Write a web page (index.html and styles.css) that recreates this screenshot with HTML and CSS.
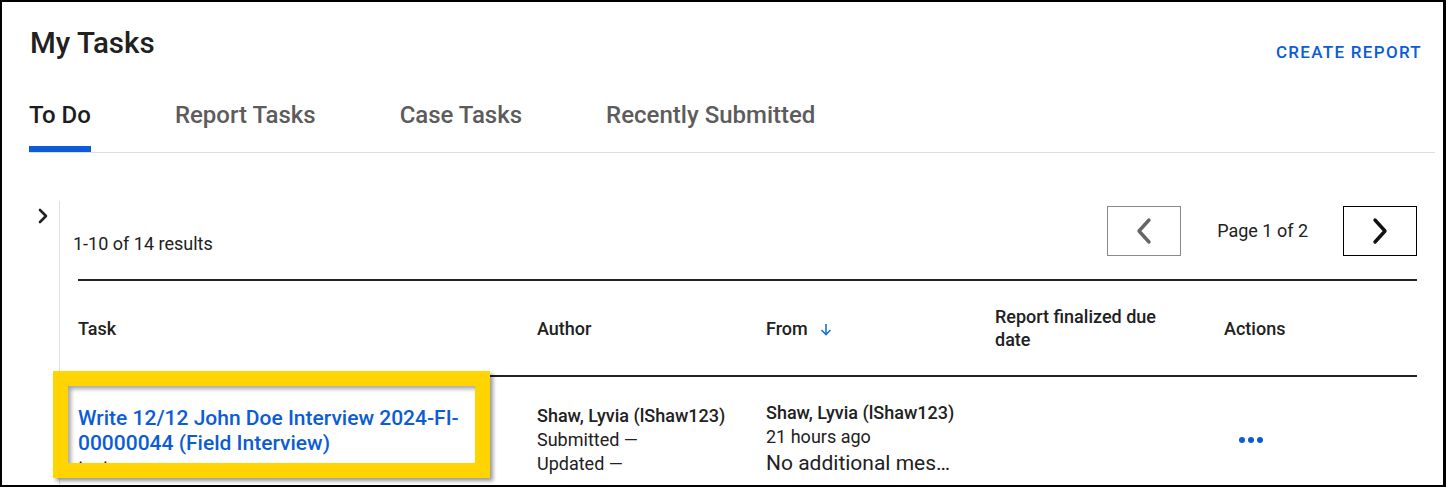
FILE: index.html
```html
<!DOCTYPE html>
<html lang="en">
<head>
<meta charset="utf-8">
<title>My Tasks</title>
<link rel="stylesheet" href="styles.css">
</head>
<body>
<div class="frame">
  <header class="header">
    <h1 class="title">My Tasks</h1>
    <a class="create" href="#">CREATE REPORT</a>
  </header>
  <nav class="tabs">
    <div class="tab active">To Do</div>
    <div class="tab">Report Tasks</div>
    <div class="tab">Case Tasks</div>
    <div class="tab">Recently Submitted</div>
  </nav>
  <main class="main">
    <div class="gutter">
      <svg class="expand" width="10" height="16" viewBox="0 0 10 16"><polyline points="2,2 8,8 2,14" fill="none" stroke="#222" stroke-width="2.6" stroke-linecap="round" stroke-linejoin="round"/></svg>
    </div>
    <section class="content">
      <div class="pager">
        <div class="results">1-10 of 14 results</div>
        <button class="pbtn prev" type="button"><svg width="18" height="28" viewBox="0 0 18 28"><polyline points="14,3 4,14 14,25" fill="none" stroke="#666" stroke-width="3.4" stroke-linecap="round" stroke-linejoin="round"/></svg></button>
        <div class="pagetext">Page 1 of 2</div>
        <button class="pbtn next" type="button"><svg width="18" height="28" viewBox="0 0 18 28"><polyline points="4,3 14,14 4,25" fill="none" stroke="#111" stroke-width="3.4" stroke-linecap="round" stroke-linejoin="round"/></svg></button>
      </div>
      <div class="table">
        <div class="thead">
          <div class="th">Task</div>
          <div class="th">Author</div>
          <div class="th">From <svg class="sort" width="12" height="13" viewBox="0 0 12 13"><line x1="6" y1="1" x2="6" y2="11.5" stroke="#1a6fe0" stroke-width="1.6"/><polyline points="1.5,7 6,11.5 10.5,7" fill="none" stroke="#1a6fe0" stroke-width="1.6"/></svg></div>
          <div class="th">Report finalized due date</div>
          <div class="th">Actions</div>
        </div>
        <div class="trow">
          <div class="td task">
            <a class="task-link" href="#">Write 12/12 John Doe Interview 2024-FI-<wbr>00000044 (Field Interview)</a>
            <div class="task-note">test</div>
          </div>
          <div class="td author">
            <div class="name">Shaw, Lyvia (lShaw123)</div>
            <div>Submitted —</div>
            <div>Updated —</div>
          </div>
          <div class="td from">
            <div class="name">Shaw, Lyvia (lShaw123)</div>
            <div>21 hours ago</div>
            <div class="msg">No additional mes…</div>
          </div>
          <div class="td due"></div>
          <div class="td actions">
            <svg class="dots" width="24" height="6" viewBox="0 0 24 6"><circle cx="3" cy="3" r="3" fill="#0b5cd5"/><circle cx="12" cy="3" r="3" fill="#0b5cd5"/><circle cx="21" cy="3" r="3" fill="#0b5cd5"/></svg>
          </div>
        </div>
      </div>
    </section>
  </main>
  <div class="highlight"></div>
</div>
</body>
</html>
```
FILE: styles.css
```css
html, body {
  margin: 0;
  padding: 0;
  background: #fff;
}
.frame {
  position: relative;
  width: 1446px;
  height: 487px;
  box-sizing: border-box;
  border: 2px solid #000;
  border-right-width: 3px;
  overflow: hidden;
  background: #fff;
  font-family: Roboto, "Liberation Sans", sans-serif;
  color: #212121;
}
.header {
  display: flex;
  justify-content: space-between;
  align-items: flex-start;
  padding: 23px 21px 0 28px;
}
.title {
  margin: 0;
  font-size: 29.5px;
  line-height: 36px;
  font-weight: 500;
  color: #212121;
}
.create {
  margin-top: 17px;
  font-size: 17px;
  line-height: 20px;
  font-weight: 500;
  letter-spacing: 1.3px;
  color: #0b5cd5;
  text-decoration: none;
}
.tabs {
  display: flex;
  gap: 84px;
  margin: 39px 8px 0 27px;
  border-bottom: 1px solid #dedede;
}
.tab {
  font-size: 24px;
  line-height: 28px;
  font-weight: 500;
  color: #5c5c5c;
  padding-bottom: 17px;
  border-bottom: 6px solid transparent;
}
.tab.active {
  color: #1d1d1d;
  border-bottom-color: #0b5cd5;
}
.main {
  display: flex;
  margin-top: 48px;
}
.gutter {
  width: 57px;
  flex: none;
}
.expand {
  display: block;
  margin: 7px 0 0 36px;
}
.content {
  flex: 1;
  border-left: 1px solid #e0e0e0;
  padding: 5px 26px 0 13px;
  min-height: 300px;
}
.pager {
  display: flex;
  align-items: center;
  height: 50px;
}
.results {
  margin-right: auto;
  align-self: flex-end;
  margin-bottom: 2px;
  font-size: 18px;
  line-height: 20px;
  color: #212121;
}
.pbtn {
  width: 74px;
  height: 50px;
  box-sizing: border-box;
  border: 1px solid #8a8a8a;
  background: #fff;
  display: flex;
  align-items: center;
  justify-content: center;
  padding: 0;
}
.pbtn.next {
  border-color: #000;
}
.pagetext {
  margin: 0 35px 0 36px;
  font-size: 18px;
  line-height: 20px;
  color: #212121;
}
.table {
  margin: 23px 0 0 5px;
  border-top: 2px solid #222;
}
.thead, .trow {
  display: grid;
  grid-template-columns: 459px 229px 229px 229px 1fr;
}
.thead {
  height: 94px;
  align-items: center;
  border-bottom: 2px solid #222;
}
.th {
  font-size: 18px;
  line-height: 23px;
  font-weight: 500;
  color: #212121;
  padding-right: 40px;
}
.sort {
  margin-left: 8px;
  vertical-align: -1px;
}
.trow {
  align-items: start;
}
.td {
  font-size: 18px;
  line-height: 24px;
  color: #212121;
}
.task {
  padding: 29px 30px 0 0;
}
.task-link {
  display: block;
  font-size: 21px;
  line-height: 25px;
  font-weight: 500;
  color: #0b5cd5;
  text-decoration: none;
}
.task-note {
  color: #111;
}
.author {
  padding-top: 27px;
}
.from {
  padding-top: 24px;
}
.name {
  font-weight: 500;
}
.msg {
  font-size: 21px;
  line-height: 28px;
  white-space: nowrap;
}
.actions {
  padding: 60px 0 0 15px;
}
.dots {
  display: block;
}
.highlight {
  position: absolute;
  left: 51px;
  top: 369px;
  width: 437px;
  height: 107px;
  box-sizing: border-box;
  border: 15px solid #ffd400;
  box-shadow: 3px 3px 4px rgba(0, 0, 0, 0.4), inset 3px 3px 4px rgba(0, 0, 0, 0.35);
}
```
